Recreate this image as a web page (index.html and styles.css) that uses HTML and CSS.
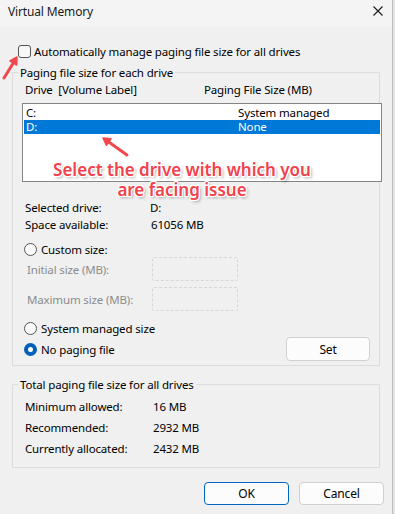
FILE: index.html
```html
<!DOCTYPE html>
<html>
<head>
<meta charset="utf-8">
<link rel="stylesheet" href="styles.css">
</head>
<body>
<div class="window">
  <div class="titlebar">
    <span class="title">Virtual Memory</span>
    <svg class="close" width="10" height="10" viewBox="0 0 10 10"><path d="M0.5 0.5L9.5 9.5M9.5 0.5L0.5 9.5" stroke="#1a1a1a" stroke-width="1.1" fill="none"/></svg>
  </div>
  <div class="content">
    <div class="auto"><span class="checkbox"></span><span>Automatically manage paging file size for all drives</span></div>
    <fieldset class="group drives">
      <legend>Paging file size for each drive</legend>
      <div class="cols"><span class="c1">Drive&nbsp; [Volume Label]</span><span>Paging File Size (MB)</span></div>
      <div class="listbox">
        <div class="row"><span class="c1">C:</span><span>System managed</span></div>
        <div class="row sel"><span class="c1">D:</span><span>None</span></div>
      </div>
      <div class="info">
        <div class="kv"><span class="k">Selected drive:</span><span>D:</span></div>
        <div class="kv"><span class="k">Space available:</span><span class="v2">61056 MB</span></div>
      </div>
      <div class="radio-row custom"><span class="radio"></span><span>Custom size:</span></div>
      <div class="size-row first"><span class="dis">Initial size (MB):</span><span class="field"></span></div>
      <div class="size-row second"><span class="dis">Maximum size (MB):</span><span class="field"></span></div>
      <div class="radio-row sysm"><span class="radio"></span><span>System managed size</span></div>
      <div class="radio-row nopage"><span class="radio on"></span><span>No paging file</span><button class="btn set">Set</button></div>
    </fieldset>
    <fieldset class="group total">
      <legend>Total paging file size for all drives</legend>
      <div class="kv2"><span class="k">Minimum allowed:</span><span>16 MB</span></div>
      <div class="kv2"><span class="k">Recommended:</span><span>2932 MB</span></div>
      <div class="kv2"><span class="k">Currently allocated:</span><span>2432 MB</span></div>
    </fieldset>
    <div class="buttons">
      <button class="btn primary">OK</button>
      <button class="btn">Cancel</button>
    </div>
  </div>
  <svg class="arrows" width="392" height="514" viewBox="0 0 392 514">
    <g fill="#f0484c" stroke="#f0484c" stroke-linecap="round" stroke-linejoin="round">
      <line x1="4" y1="78" x2="13.3" y2="63" stroke-width="3"/>
      <polygon points="17,57 16.7,65 9.9,60.9" stroke-width="1.5"/>
      <line x1="127" y1="155" x2="108.7" y2="142" stroke-width="3"/>
      <polygon points="103,138 111,138.8 106.4,145.3" stroke-width="1.5"/>
    </g>
  </svg>
  <div class="callout">Select the drive with which you<br>are facing issue</div>
</div>
</body>
</html>
```

FILE: styles.css
```css
html, body {
  margin: 0;
  padding: 0;
  background: #e4e4e4;
}
body {
  font-family: "Noto Sans", "Liberation Sans", sans-serif;
  font-size: 11.5px;
  letter-spacing: -0.15px;
  color: #000;
}
.window {
  position: relative;
  width: 392px;
  height: 514px;
  background: #f0f0f0;
  border-right: 1px solid #bcbcbc;
  overflow: hidden;
}
.titlebar {
  height: 27px;
  background: #f4f4f4;
  display: flex;
  align-items: flex-start;
}
.title {
  padding-left: 8px;
  line-height: 24px;
  font-size: 12px;
  color: #1a1a1a;
}
.close {
  margin-left: auto;
  margin-right: 9px;
  margin-top: 6px;
}
.auto {
  margin-top: 17px;
  padding-left: 18px;
  height: 15px;
  line-height: 15px;
  display: flex;
  align-items: center;
  gap: 3px;
}
.checkbox {
  width: 11px;
  height: 11px;
  border: 1px solid #555;
  border-radius: 3px;
  background: #f7f7f7;
}
.group {
  margin: 6px 12px 0 12px;
  border: 1px solid #dcdcdc;
  padding: 0 9px 4px 9px;
  min-width: 0;
}
.group legend {
  padding: 0 2px;
  margin-left: -4px;
  line-height: 15px;
}
.cols {
  margin-top: 3px;
  line-height: 14px;
  padding-left: 3px;
  display: flex;
}
.c1 {
  width: 179px;
  flex: none;
}
.listbox {
  margin-top: 6px;
  margin-right: -12px;
  height: 79px;
  box-sizing: border-box;
  border: 1px solid #858585;
  background: #fff;
  padding: 2px 1px 0 1px;
}
.row {
  height: 14px;
  line-height: 14px;
  display: flex;
  padding-left: 2px;
}
.row .c1 {
  width: 212px;
}
.row.sel {
  background: #0078d7;
  color: #fff;
}
.info {
  margin-top: 17px;
  padding-left: 3px;
}
.kv {
  display: flex;
  line-height: 17px;
}
.kv .k {
  width: 125px;
  flex: none;
}
.kv .v2 {
  padding-left: 1px;
}
.radio-row {
  display: flex;
  align-items: center;
  gap: 4px;
  padding-left: 2px;
  line-height: 17px;
}
.radio {
  width: 11px;
  height: 11px;
  border: 1px solid #555;
  border-radius: 50%;
  background: #fafafa;
  box-sizing: content-box;
}
.radio.on {
  width: 5px;
  height: 5px;
  border: 4px solid #005fb8;
  background: #fff;
}
.custom {
  margin-top: 8px;
}
.size-row {
  display: flex;
  align-items: center;
  height: 24px;
  padding-left: 5px;
}
.size-row .dis {
  width: 125px;
  flex: none;
  color: #8c8c8c;
}
.size-row.first {
  margin-top: -1px;
}
.size-row.second {
  margin-top: 6px;
}
.field {
  width: 86px;
  height: 24px;
  box-sizing: border-box;
  border: 1px dashed #d6d6d6;
  border-radius: 2px;
}
.sysm {
  margin-top: 9px;
}
.nopage {
  height: 24px;
}
.btn {
  font-family: inherit;
  font-size: 12px;
  letter-spacing: inherit;
  color: #000;
  width: 85px;
  height: 23px;
  padding: 0;
  background: #fcfcfc;
  border: 1px solid #d0d0d0;
  border-radius: 4px;
}
.set {
  margin-left: auto;
  width: 84px;
  height: 24px;
}
.group.total {
  margin-top: 11px;
  padding-bottom: 8px;
}
.kv2 {
  display: flex;
  line-height: 21px;
  padding-left: 3px;
}
.kv2:first-of-type {
  margin-top: 4px;
}
.kv2 .k {
  width: 128px;
  flex: none;
}
.buttons {
  margin-top: 14px;
  display: flex;
  justify-content: flex-end;
  gap: 10px;
  padding-right: 8px;
}
.btn.primary {
  border-color: #0067c0;
}
.arrows {
  position: absolute;
  left: 0;
  top: 0;
  pointer-events: none;
}
.callout {
  position: absolute;
  left: 32px;
  top: 160px;
  width: 300px;
  text-align: center;
  font-family: "Noto Sans", sans-serif;
  font-weight: 600;
  font-size: 17px;
  letter-spacing: 0;
  line-height: 20px;
  color: #f2424d;
  text-shadow: 1px 0 0 #fff, -1px 0 0 #fff, 0 1px 0 #fff, 0 -1px 0 #fff, 1px 1px 0 #fff, -1px -1px 0 #fff, 1px -1px 0 #fff, -1px 1px 0 #fff, 2px 2px 3px rgba(0,0,0,0.35);
}
```
